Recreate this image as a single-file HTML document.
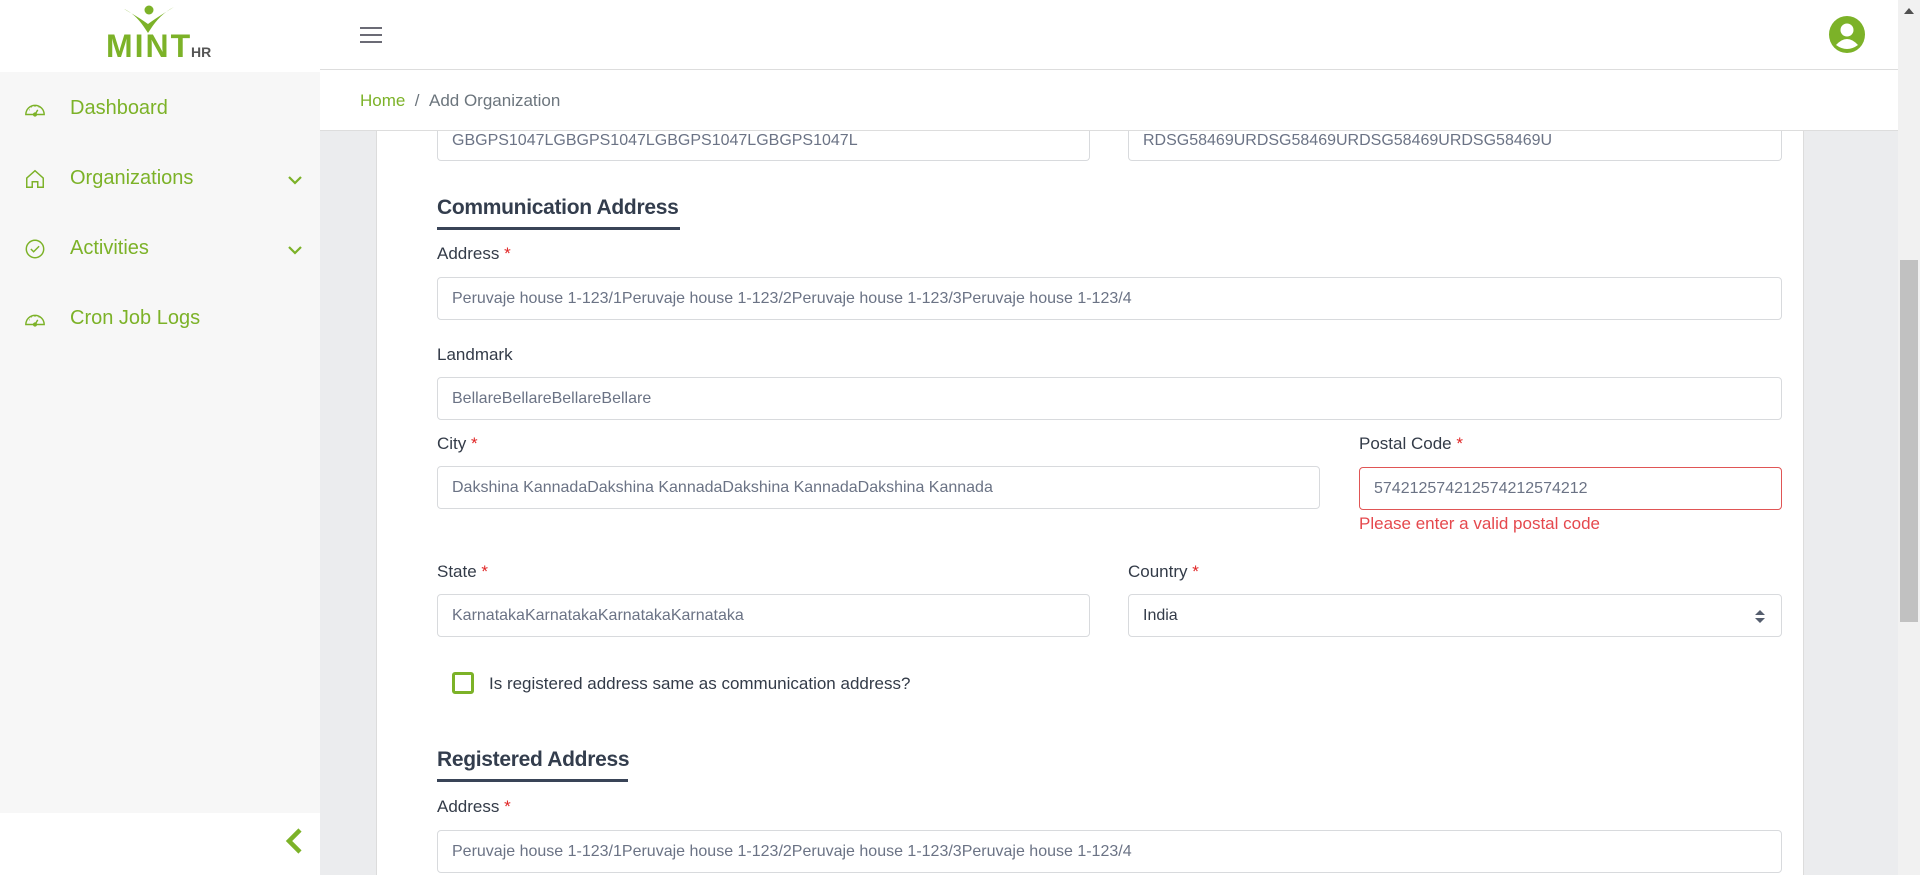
<!DOCTYPE html>
<html><head><meta charset="utf-8"><style>
*{box-sizing:border-box;margin:0;padding:0}
body{width:1920px;height:875px;overflow:hidden;background:#ebecee;font-family:"Liberation Sans",sans-serif;position:relative}
.sb{position:absolute;left:0;top:0;width:320px;height:875px;background:#f7f7f7}
.logo{height:72px;background:#fff;position:relative}
.nav{position:absolute;left:0;width:320px;color:#7cb228;font-size:20px}
.nav .ic{position:absolute;left:24px;top:-11px}
.nav .tx{position:absolute;left:70px;top:-12px}
.nav .ch{position:absolute;left:286px;top:-8px}
.sbb{position:absolute;left:0;top:813px;width:320px;height:62px;background:#fff}
.hdr{position:absolute;left:320px;top:0;width:1578px;height:70px;background:#fff;border-bottom:1px solid #ddd;z-index:5}
.bc{position:absolute;left:320px;top:70px;width:1578px;height:61px;background:#fff;border-bottom:1px solid #ddd;font-size:17px;color:#6c757d;z-index:5}
.card{position:absolute;left:376px;top:131px;width:1428px;height:744px;background:#fff;border-left:1px solid #dcdcdc;border-right:1px solid #dcdcdc}
.inp{position:absolute;height:43px;border:1px solid #d8dadd;border-radius:4px;background:#fff;font-size:16px;color:#6b7385;padding-left:14px;line-height:41px;white-space:nowrap;overflow:hidden}
.lbl{position:absolute;font-size:17px;color:#333b48}
.lbl b{color:#e02424;font-weight:normal}
.h{position:absolute;font-size:21px;color:#333d4d;font-weight:bold;letter-spacing:-0.3px}
.ul{position:absolute;height:3px;background:#394457}
.scr{position:absolute;left:1898px;top:0;width:22px;height:875px;background:#f1f1f1}
</style></head><body>
<div class="sb">
 <div class="logo">
  <svg width="320" height="72" style="position:absolute;left:0;top:0">
   <path d="M124 9 Q140 18 148 24 Q156 18 174 7 Q160 14 150 30 L148 33 L146 30 Q136 14 124 9Z" fill="#7cb228"/>
   <circle cx="149" cy="10" r="4.5" fill="#7cb228"/>
   <text x="106" y="57" font-family="Liberation Sans" font-size="32" font-weight="bold" fill="#7cb228" letter-spacing="2">MINT</text>
   <text x="191" y="57" font-family="Liberation Sans" font-size="14" font-weight="bold" fill="#555">HR</text>
  </svg>
 </div>
 <div class="nav" style="top:109px"><svg class="ic" width="22" height="22" viewBox="0 0 24 24" fill="none" stroke="#7cb228" stroke-width="1.6"><path d="M2 18a10 10 0 0 1 20 0zM12 18l3-5M6 13h.5M8 10h.5M12 9v.5M16 10h.5"/><circle cx="12" cy="18" r="1.5"/></svg><span class="tx">Dashboard</span></div>
 <div class="nav" style="top:179px"><svg class="ic" width="22" height="22" viewBox="0 0 24 24" fill="none" stroke="#7cb228" stroke-width="1.6"><path d="M3 11l9-8 9 8v10h-6v-6h-6v6H3z"/></svg><span class="tx">Organizations</span><svg class="ch" width="18" height="18" viewBox="0 0 18 18" fill="none" stroke="#7cb228" stroke-width="2.2"><path d="M3 6l6 6 6-6"/></svg></div>
 <div class="nav" style="top:249px"><svg class="ic" width="22" height="22" viewBox="0 0 24 24" fill="none" stroke="#7cb228" stroke-width="1.6"><circle cx="12" cy="12" r="9.5"/><path d="M7.5 12l3 3 6-6"/></svg><span class="tx">Activities</span><svg class="ch" width="18" height="18" viewBox="0 0 18 18" fill="none" stroke="#7cb228" stroke-width="2.2"><path d="M3 6l6 6 6-6"/></svg></div>
 <div class="nav" style="top:319px"><svg class="ic" width="22" height="22" viewBox="0 0 24 24" fill="none" stroke="#7cb228" stroke-width="1.6"><path d="M2 18a10 10 0 0 1 20 0zM12 18l3-5M6 13h.5M8 10h.5M12 9v.5M16 10h.5"/><circle cx="12" cy="18" r="1.5"/></svg><span class="tx">Cron Job Logs</span></div>
 <div class="sbb"><svg style="position:absolute;left:284px;top:14px" width="20" height="28" viewBox="0 0 20 28" fill="none" stroke="#7cb228" stroke-width="4.5"><path d="M16 3L5 14l11 11"/></svg></div>
</div>
<div class="hdr">
 <svg style="position:absolute;left:40px;top:26px" width="22" height="18"><path d="M0 2h22M0 9h22M0 16h22" stroke="#6b6b75" stroke-width="2"/></svg>
 <svg style="position:absolute;left:1509px;top:16px" width="36" height="37" viewBox="0 0 36 37"><ellipse cx="18" cy="18.5" rx="18" ry="18.5" fill="#7cb228"/><circle cx="18" cy="14" r="6.5" fill="#fff"/><path d="M7 29 Q18 17 29 29 Q18 37 7 29Z" fill="#fff"/></svg>
</div>
<div class="bc"><span style="position:absolute;left:40px;top:21px"><span style="color:#7cb228">Home</span>&nbsp; / &nbsp;Add Organization</span></div>
<div class="card"></div>
<div class="inp" style="left:437px;top:117px;width:653px;height:44px;line-height:48px;border-top:none;border-radius:0 0 4px 4px">GBGPS1047LGBGPS1047LGBGPS1047LGBGPS1047L</div>
<div class="inp" style="left:1128px;top:117px;width:654px;height:44px;line-height:48px;border-top:none;border-radius:0 0 4px 4px">RDSG58469URDSG58469URDSG58469URDSG58469U</div>
<div class="h" style="left:437px;top:196px">Communication Address</div>
<div class="ul" style="left:437px;top:227px;width:243px"></div>
<div class="lbl" style="left:437px;top:244px">Address <b>*</b></div>
<div class="inp" style="left:437px;top:277px;width:1345px">Peruvaje house 1-123/1Peruvaje house 1-123/2Peruvaje house 1-123/3Peruvaje house 1-123/4</div>
<div class="lbl" style="left:437px;top:345px">Landmark</div>
<div class="inp" style="left:437px;top:377px;width:1345px">BellareBellareBellareBellare</div>
<div class="lbl" style="left:437px;top:434px">City <b>*</b></div>
<div class="inp" style="left:437px;top:466px;width:883px">Dakshina KannadaDakshina KannadaDakshina KannadaDakshina Kannada</div>
<div class="lbl" style="left:1359px;top:434px">Postal Code <b>*</b></div>
<div class="inp" style="left:1359px;top:467px;width:423px;border-color:#e05555">574212574212574212574212</div>
<div style="position:absolute;left:1359px;top:514px;font-size:17px;color:#e5484d">Please enter a valid postal code</div>
<div class="lbl" style="left:437px;top:562px">State <b>*</b></div>
<div class="inp" style="left:437px;top:594px;width:653px">KarnatakaKarnatakaKarnatakaKarnataka</div>
<div class="lbl" style="left:1128px;top:562px">Country <b>*</b></div>
<div class="inp" style="left:1128px;top:594px;width:654px;color:#333b48">India<svg style="position:absolute;right:16px;top:15px" width="10" height="13"><path d="M0 5l5-5 5 5zM0 8l5 5 5-5z" fill="#555e6e"/></svg></div>
<div style="position:absolute;left:452px;top:672px;width:22px;height:22px;border:3px solid #7cb228;border-radius:3px"></div>
<div class="lbl" style="left:489px;top:674px">Is registered address same as communication address?</div>
<div class="h" style="left:437px;top:748px">Registered Address</div>
<div class="ul" style="left:437px;top:779px;width:191px"></div>
<div class="lbl" style="left:437px;top:797px">Address <b>*</b></div>
<div class="inp" style="left:437px;top:830px;width:1345px">Peruvaje house 1-123/1Peruvaje house 1-123/2Peruvaje house 1-123/3Peruvaje house 1-123/4</div>
<div class="scr"><svg style="position:absolute;left:6px;top:8px" width="10" height="6"><path d="M0 6l5-6 5 6z" fill="#505050"/></svg><div style="position:absolute;left:2px;top:260px;width:18px;height:362px;background:#c1c1c1"></div></div>
</body></html>
